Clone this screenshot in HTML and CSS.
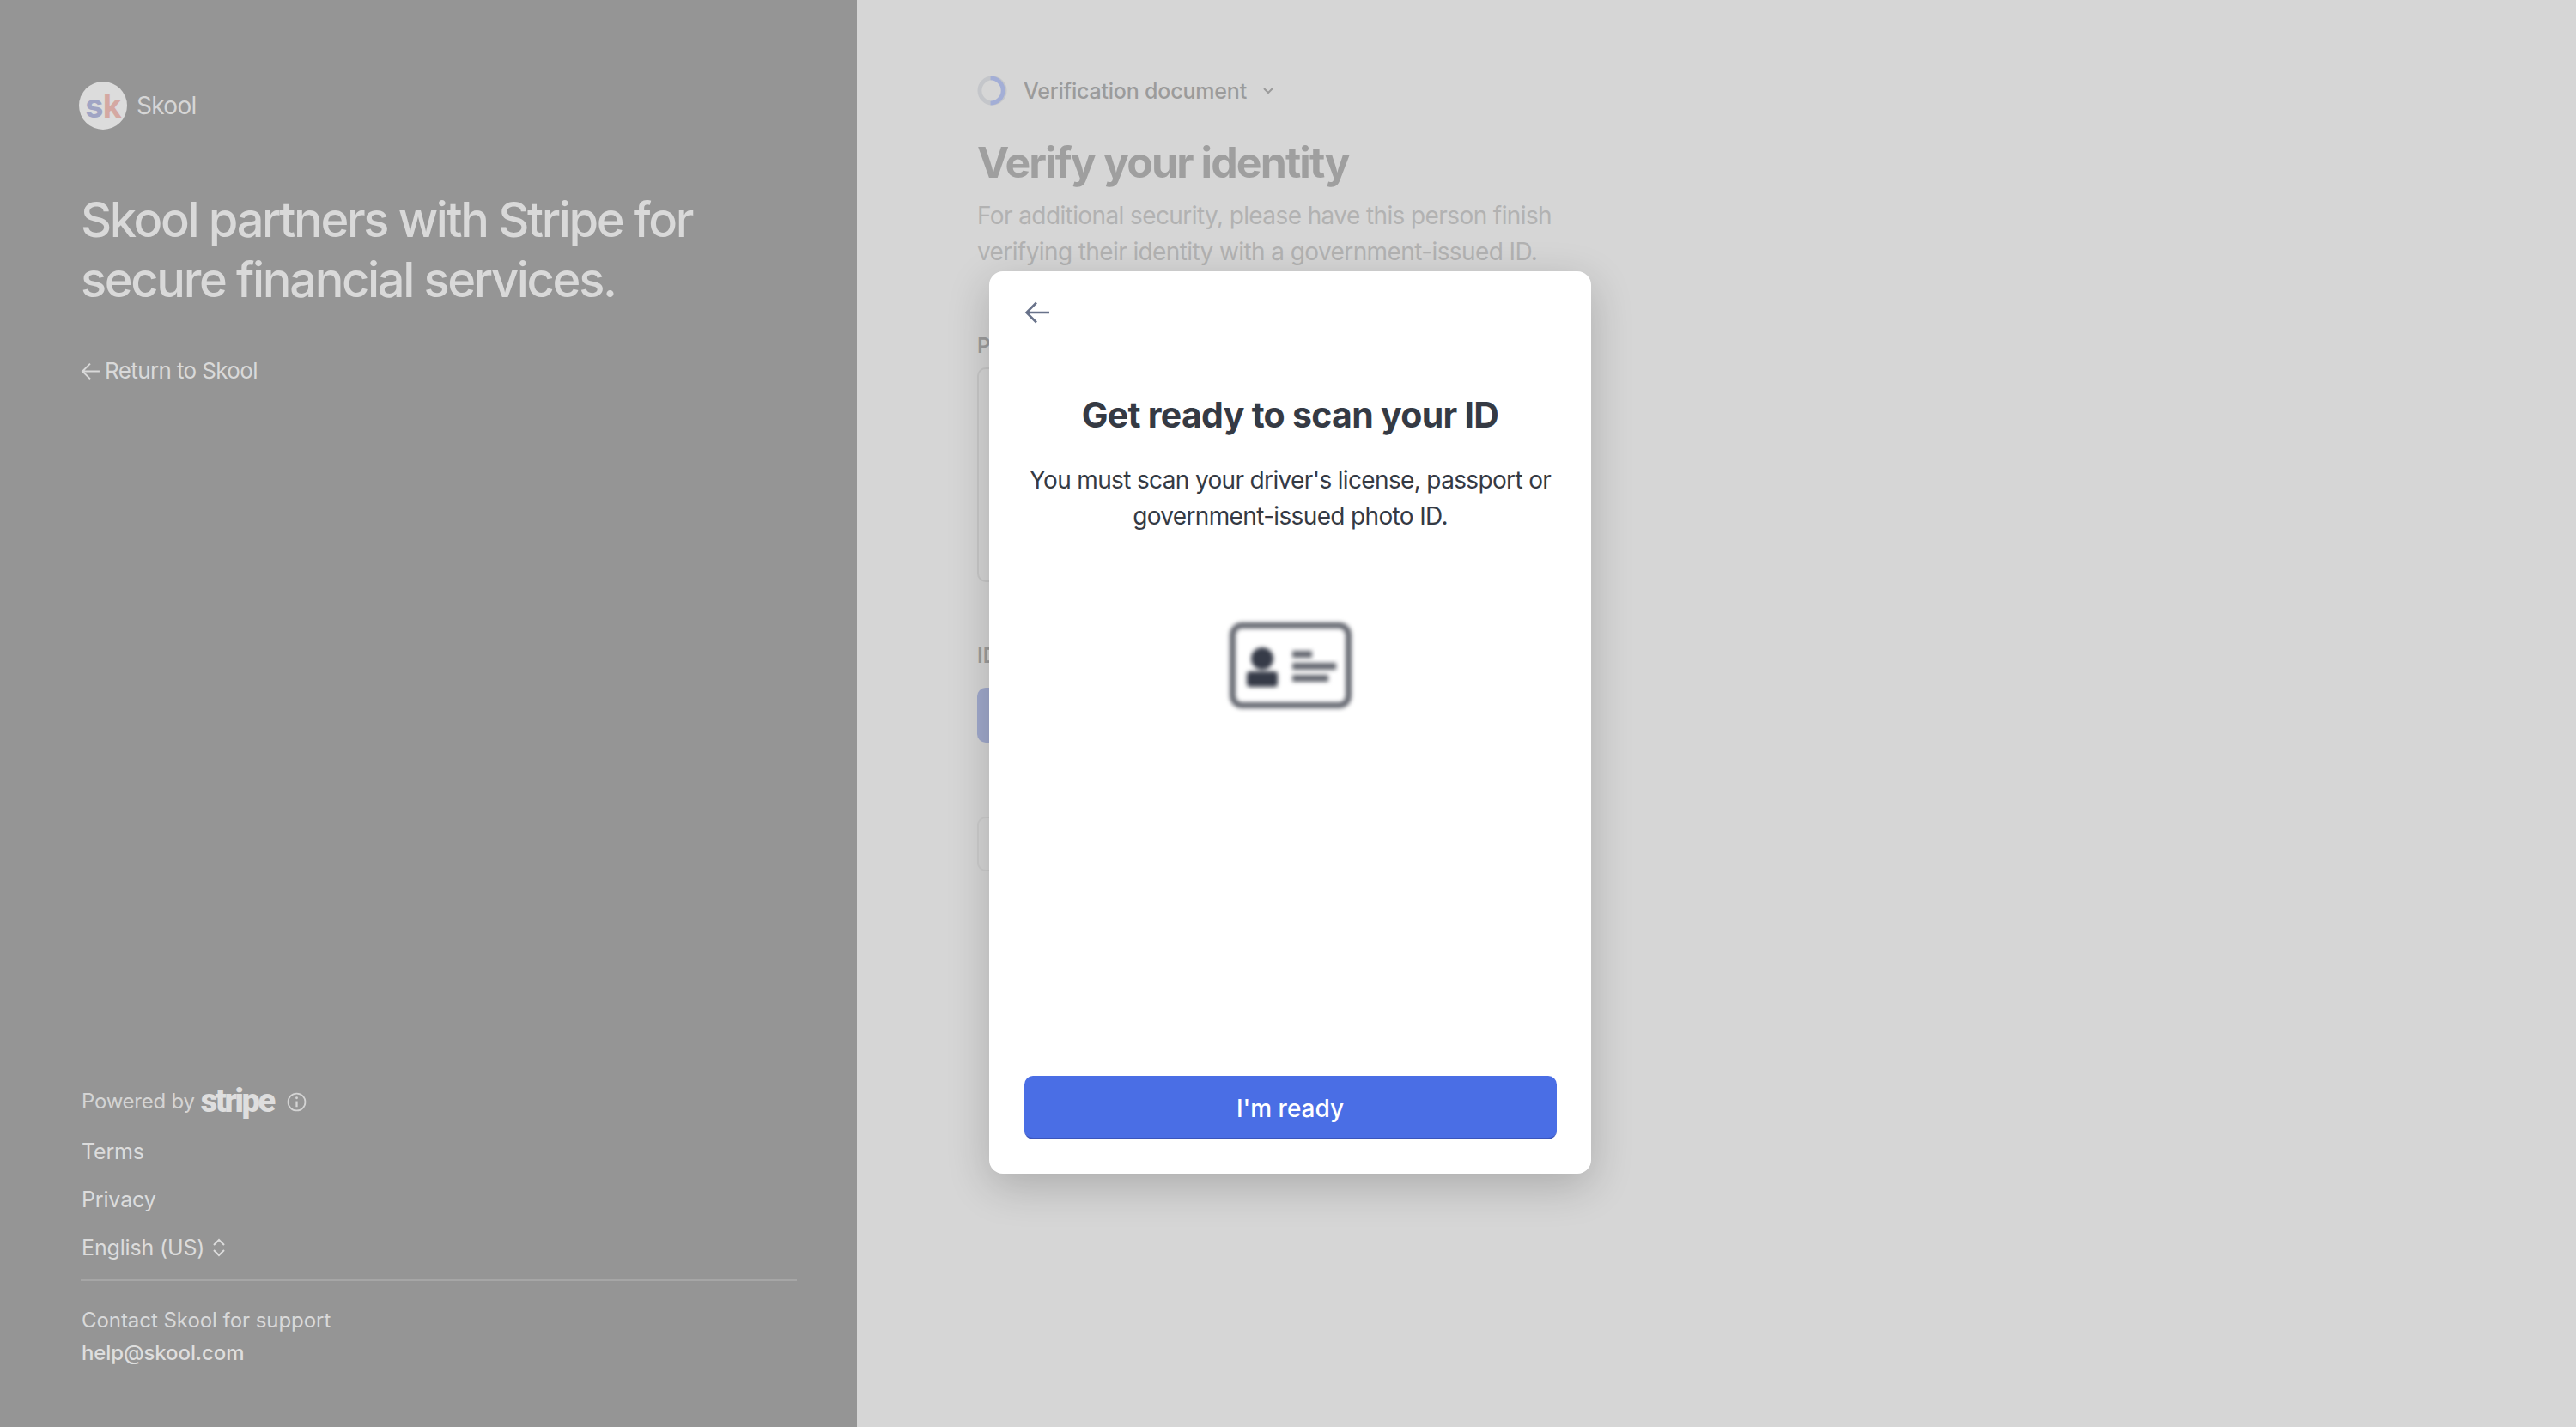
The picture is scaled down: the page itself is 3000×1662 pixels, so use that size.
FILE: index.html
```html
<!DOCTYPE html>
<html lang="en">
<head>
  <meta charset="UTF-8" />
  <meta name="viewport" content="width=device-width, initial-scale=1" />
  <title>Verify your identity</title>
  <link rel="stylesheet" href="styles.css">
</head>
<body>
  <div class="page">
    <aside class="side">
      <div class="side-top">
        <div class="brand">
          <div class="brand-logo"><span class="logo-s">s</span><span class="logo-k">k</span></div>
          <span class="brand-name">Skool</span>
        </div>
        <h2 class="headline">Skool partners with Stripe for secure financial services.</h2>
        <a class="return-link">
          <svg class="return-arrow" viewBox="0 0 22 22" fill="none" stroke="currentColor" stroke-width="1.9"><path d="M21 11H2.5M10.5 2.5L2 11l8.500 8.500"/></svg>
          <span>Return to Skool</span>
        </a>
      </div>

      <div class="side-bottom">
        <div class="powered">
          <span>Powered by</span>
          <span class="stripe-word">stripe</span>
          <svg class="info-icon" viewBox="0 0 24 24" fill="none" stroke="currentColor" stroke-width="1.8"><circle cx="12" cy="12" r="10.4"/><path d="M12 11v7" stroke-width="2.4"/><circle cx="12" cy="7" r="1.5" fill="currentColor" stroke="none"/></svg>
        </div>
        <a class="foot-link">Terms</a>
        <a class="foot-link">Privacy</a>
        <div class="foot-link lang">
          <span>English (US)</span>
          <svg class="updown" viewBox="0 0 18 24" fill="none" stroke="currentColor" stroke-width="2"><path d="M3 9l6-6 6 6M3 15l6 6 6-6"/></svg>
        </div>
        <div class="divider"></div>
        <div class="support-label">Contact Skool for support</div>
        <div class="support-mail">help@skool.com</div>
      </div>
    </aside>

    <main class="main">
      <div class="steps">
        <svg class="spinner" viewBox="0 0 36 36" fill="none" stroke-width="5"><circle cx="18" cy="18" r="15" stroke="#c4c6ca"/><path d="M16 3a15 15 0 0 1 0 30" stroke="#a3aed6"/></svg>
        <span class="steps-label">Verification document</span>
        <svg class="steps-caret" viewBox="0 0 14 10" fill="none" stroke="currentColor" stroke-width="2"><path d="M2 2l5 5 5-5"/></svg>
      </div>
      <h1 class="title">Verify your identity</h1>
      <p class="lead">For additional security, please have this person finish verifying their identity with a government-issued ID.</p>
      <div class="field-label first-label">Person</div>
      <div class="person-box"></div>
      <div class="field-label id-label">ID</div>
      <div class="blue-bar"></div>
      <div class="ghost-bar"></div>
    </main>
  </div>

  <div class="modal">
    <svg class="modal-back" viewBox="0 0 30 26" fill="none" stroke="currentColor" stroke-width="2.6"><path d="M29 13H3M14 1.500L2.500 13 14 24.500"/></svg>
    <h2 class="modal-title">Get ready to scan your ID</h2>
    <p class="modal-text">You must scan your driver's license, passport or government-issued photo ID.</p>
    <svg class="id-card" viewBox="0 0 142 100" fill="none">
      <rect x="3.500" y="3.500" width="135" height="93" rx="11" stroke="#62656e" stroke-width="7"/>
      <circle cx="38" cy="42" r="13" fill="#363b48"/>
      <rect x="20" y="57" width="36" height="18" rx="4" fill="#363b48"/>
      <rect x="73" y="33" width="23" height="8" fill="#62656e"/>
      <rect x="73" y="47" width="51" height="8" fill="#62656e"/>
      <rect x="73" y="61" width="42" height="8" fill="#62656e"/>
    </svg>
    <button class="modal-btn">I'm ready</button>
  </div>
</body>
</html>
```

FILE: styles.css
```css
html, body {
  margin: 0;
  height: 100%;
}

body {
  font-family: Inter, "Liberation Sans", sans-serif;
  background: #d6d6d6;
  overflow: hidden;
}

.page {
  display: flex;
  height: 1662px;
}

/* left panel */
.side {
  width: 998px;
  box-sizing: border-box;
  padding: 95px 70px 67px 95px;
  background: #959595;
  color: #d9d9d9;
  display: flex;
  flex-direction: column;
  justify-content: space-between;
}

.brand {
  display: flex;
  align-items: center;
  gap: 11px;
  margin-left: -3px;
}

.brand-logo {
  width: 56px;
  height: 56px;
  border-radius: 50%;
  background: #dcdcdc;
  display: flex;
  align-items: center;
  justify-content: center;
  font-size: 38px;
  line-height: 56px;
  font-weight: 700;
  letter-spacing: -1px;
}

.logo-s { color: #a0a4c4; }
.logo-k { color: #d4a8a2; }

.brand-name {
  font-size: 28px;
  letter-spacing: -0.7px;
  color: #d6d6d6;
}

.headline {
  margin: 70px 0 0 -1px;
  width: 780px;
  font-size: 56px;
  line-height: 70px;
  font-weight: 500;
  letter-spacing: -2.35px;
  color: #d9d9d9;
}

.return-link {
  display: flex;
  align-items: center;
  gap: 5px;
  margin-top: 55px;
  font-size: 26px;
  line-height: 32px;
  letter-spacing: -0.62px;
}

.return-arrow {
  width: 23px;
  height: 23px;
  margin-left: -1px;
}

.powered {
  display: flex;
  align-items: center;
  height: 44px;
  margin-bottom: 9px;
  font-size: 24px;
  letter-spacing: -0.25px;
  color: #d4d4d4;
}

.stripe-word {
  margin-left: 7px;
  font-family: Roboto, sans-serif;
  font-size: 38px;
  font-weight: 900;
  letter-spacing: -2.4px;
  color: #dedede;
}

.info-icon {
  width: 23px;
  height: 23px;
  margin: 3px 0 0 15px;
}

.foot-link {
  display: flex;
  align-items: center;
  height: 56px;
  font-size: 25px;
  letter-spacing: -0.15px;
  color: #dcdcdc;
}

.lang { gap: 8px; }

.updown {
  width: 18px;
  height: 24px;
}

.divider {
  height: 2px;
  background: #a6a6a6;
  margin: 9px 0 27px -1px;
}

.support-label {
  font-size: 24px;
  line-height: 38px;
  letter-spacing: -0.05px;
}

.support-mail {
  font-size: 24px;
  line-height: 38px;
  font-weight: 500;
  letter-spacing: -0.1px;
  color: #dedede;
}

/* right side, dimmed behind the dialog */
.main {
  padding: 88px 0 0 140px;
  width: 690px;
}

.steps {
  display: flex;
  align-items: center;
  height: 35px;
  margin-bottom: 34px;
}

.spinner {
  width: 35px;
  height: 35px;
}

.steps-label {
  margin-left: 19px;
  font-size: 25px;
  font-weight: 500;
  letter-spacing: -0.2px;
  color: #9b9b9b;
}

.steps-caret {
  width: 14px;
  height: 10px;
  margin-left: 18px;
  color: #9b9b9b;
}

.title {
  margin: 0;
  font-size: 50px;
  line-height: 64px;
  font-weight: 700;
  letter-spacing: -1.9px;
  color: #9f9f9f;
}

.lead {
  margin: 9px 0 0;
  font-size: 28px;
  line-height: 42px;
  letter-spacing: -0.6px;
  color: #b2b2b2;
}

.field-label {
  font-size: 24px;
  line-height: 28px;
  font-weight: 600;
  color: #9d9d9d;
}

.first-label { margin-top: 75px; }

.person-box {
  height: 246px;
  margin-top: 11px;
  border: 2px solid #c8c8c8;
  border-radius: 10px;
}

.id-label { margin-top: 72px; }

.blue-bar {
  height: 64px;
  margin-top: 23px;
  border-radius: 10px;
  background: #a0a9cc;
}

.ghost-bar {
  height: 60px;
  margin-top: 86px;
  border: 2px solid #cdcdcd;
  border-radius: 10px;
}

/* dialog */
.modal {
  position: absolute;
  top: 316px;
  left: 1152px;
  width: 701px;
  height: 1051px;
  box-sizing: border-box;
  padding: 35px 41px 40px;
  background: #fff;
  border-radius: 16px;
  box-shadow: 0 14px 50px rgba(0, 0, 0, 0.2);
  display: flex;
  flex-direction: column;
  align-items: center;
  text-align: center;
}

.modal-back {
  align-self: flex-start;
  width: 30px;
  height: 26px;
  color: #68728a;
}

.modal-title {
  margin: 81px 0 0;
  font-size: 41px;
  line-height: 50px;
  font-weight: 700;
  letter-spacing: -0.7px;
  color: #353a44;
}

.modal-text {
  margin: 30px 0 0;
  font-size: 28px;
  line-height: 42px;
  letter-spacing: -0.65px;
  color: #353a44;
}

.id-card {
  width: 142px;
  height: 100px;
  margin-top: 103px;
  filter: blur(2.5px);
}

.modal-btn {
  width: 620px;
  height: 74px;
  margin-top: auto;
  padding: 4px 0 0;
  border: none;
  border-bottom: 2px solid #3b55bb;
  border-radius: 10px;
  background: #4a6ee5;
  color: #fff;
  font-family: inherit;
  font-size: 28px;
  font-weight: 500;
}
```
